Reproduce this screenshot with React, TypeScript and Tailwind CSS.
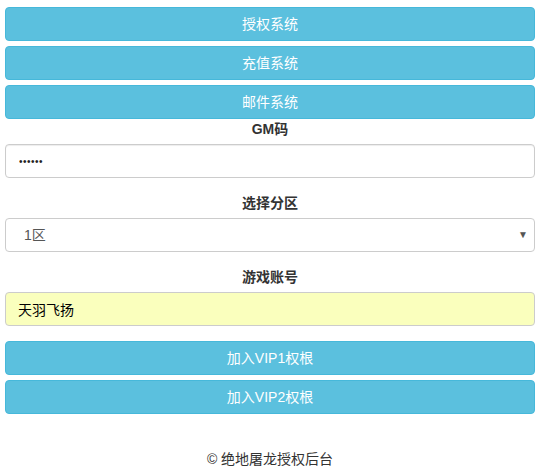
import { useState } from "react";

const font = "font-['Helvetica_Neue','Liberation_Sans','Noto_Sans_CJK_SC',sans-serif]";

function InfoButton({ label }: { label: string }) {
  return (
    <button
      type="button"
      className="h-[34px] w-full rounded-[4px] border border-[#46b8da] bg-[#5bc0de] text-[14px] leading-[20px] text-white"
    >
      {label}
    </button>
  );
}

export default function App() {
  const [account, setAccount] = useState("天羽飞扬");
  const [zone, setZone] = useState("1");

  return (
    <div className={`${font} min-h-[472px] bg-white px-[5px] pt-[7px] text-[14px] leading-[20px] text-[#333]`}>
      <div className="flex flex-col gap-[5px]">
        <InfoButton label="授权系统" />
        <InfoButton label="充值系统" />
        <InfoButton label="邮件系统" />
      </div>

      <div className="mb-[15px] flex flex-col">
        <label className="mb-[5px] text-center font-bold">GM码</label>
        <input
          type="password"
          defaultValue="123456"
          className="h-[34px] w-full rounded-[4px] border border-[#ccc] bg-white px-[13px] text-[10px] tracking-[0.5px] text-[#222] shadow-[inset_0_1px_1px_rgba(0,0,0,0.075)] outline-none"
        />
      </div>

      <div className="mb-[15px] flex flex-col">
        <label className="mb-[5px] text-center font-bold">选择分区</label>
        <div className="relative">
          <select
            value={zone}
            onChange={(e) => setZone(e.target.value)}
            className="h-[34px] w-full appearance-none rounded-[4px] border border-[#ccc] bg-white pl-[18px] text-[14px] text-[#555] outline-none"
          >
            <option value="1">1区</option>
            <option value="2">2区</option>
          </select>
          <span className="pointer-events-none absolute right-[7px] top-[7px] text-[10px] text-[#555]">▼</span>
        </div>
      </div>

      <div className="mb-[15px] flex flex-col">
        <label className="mb-[5px] text-center font-bold">游戏账号</label>
        <input
          type="text"
          value={account}
          onChange={(e) => setAccount(e.target.value)}
          className="h-[34px] w-full rounded-[4px] border border-[#ccc] bg-[#faffbd] px-[12px] text-[14px] text-black outline-none"
        />
      </div>

      <div className="flex flex-col gap-[5px]">
        <InfoButton label="加入VIP1权根" />
        <InfoButton label="加入VIP2权根" />
      </div>

      <footer className="mt-[35px] text-center">© 绝地屠龙授权后台</footer>
    </div>
  );
}
